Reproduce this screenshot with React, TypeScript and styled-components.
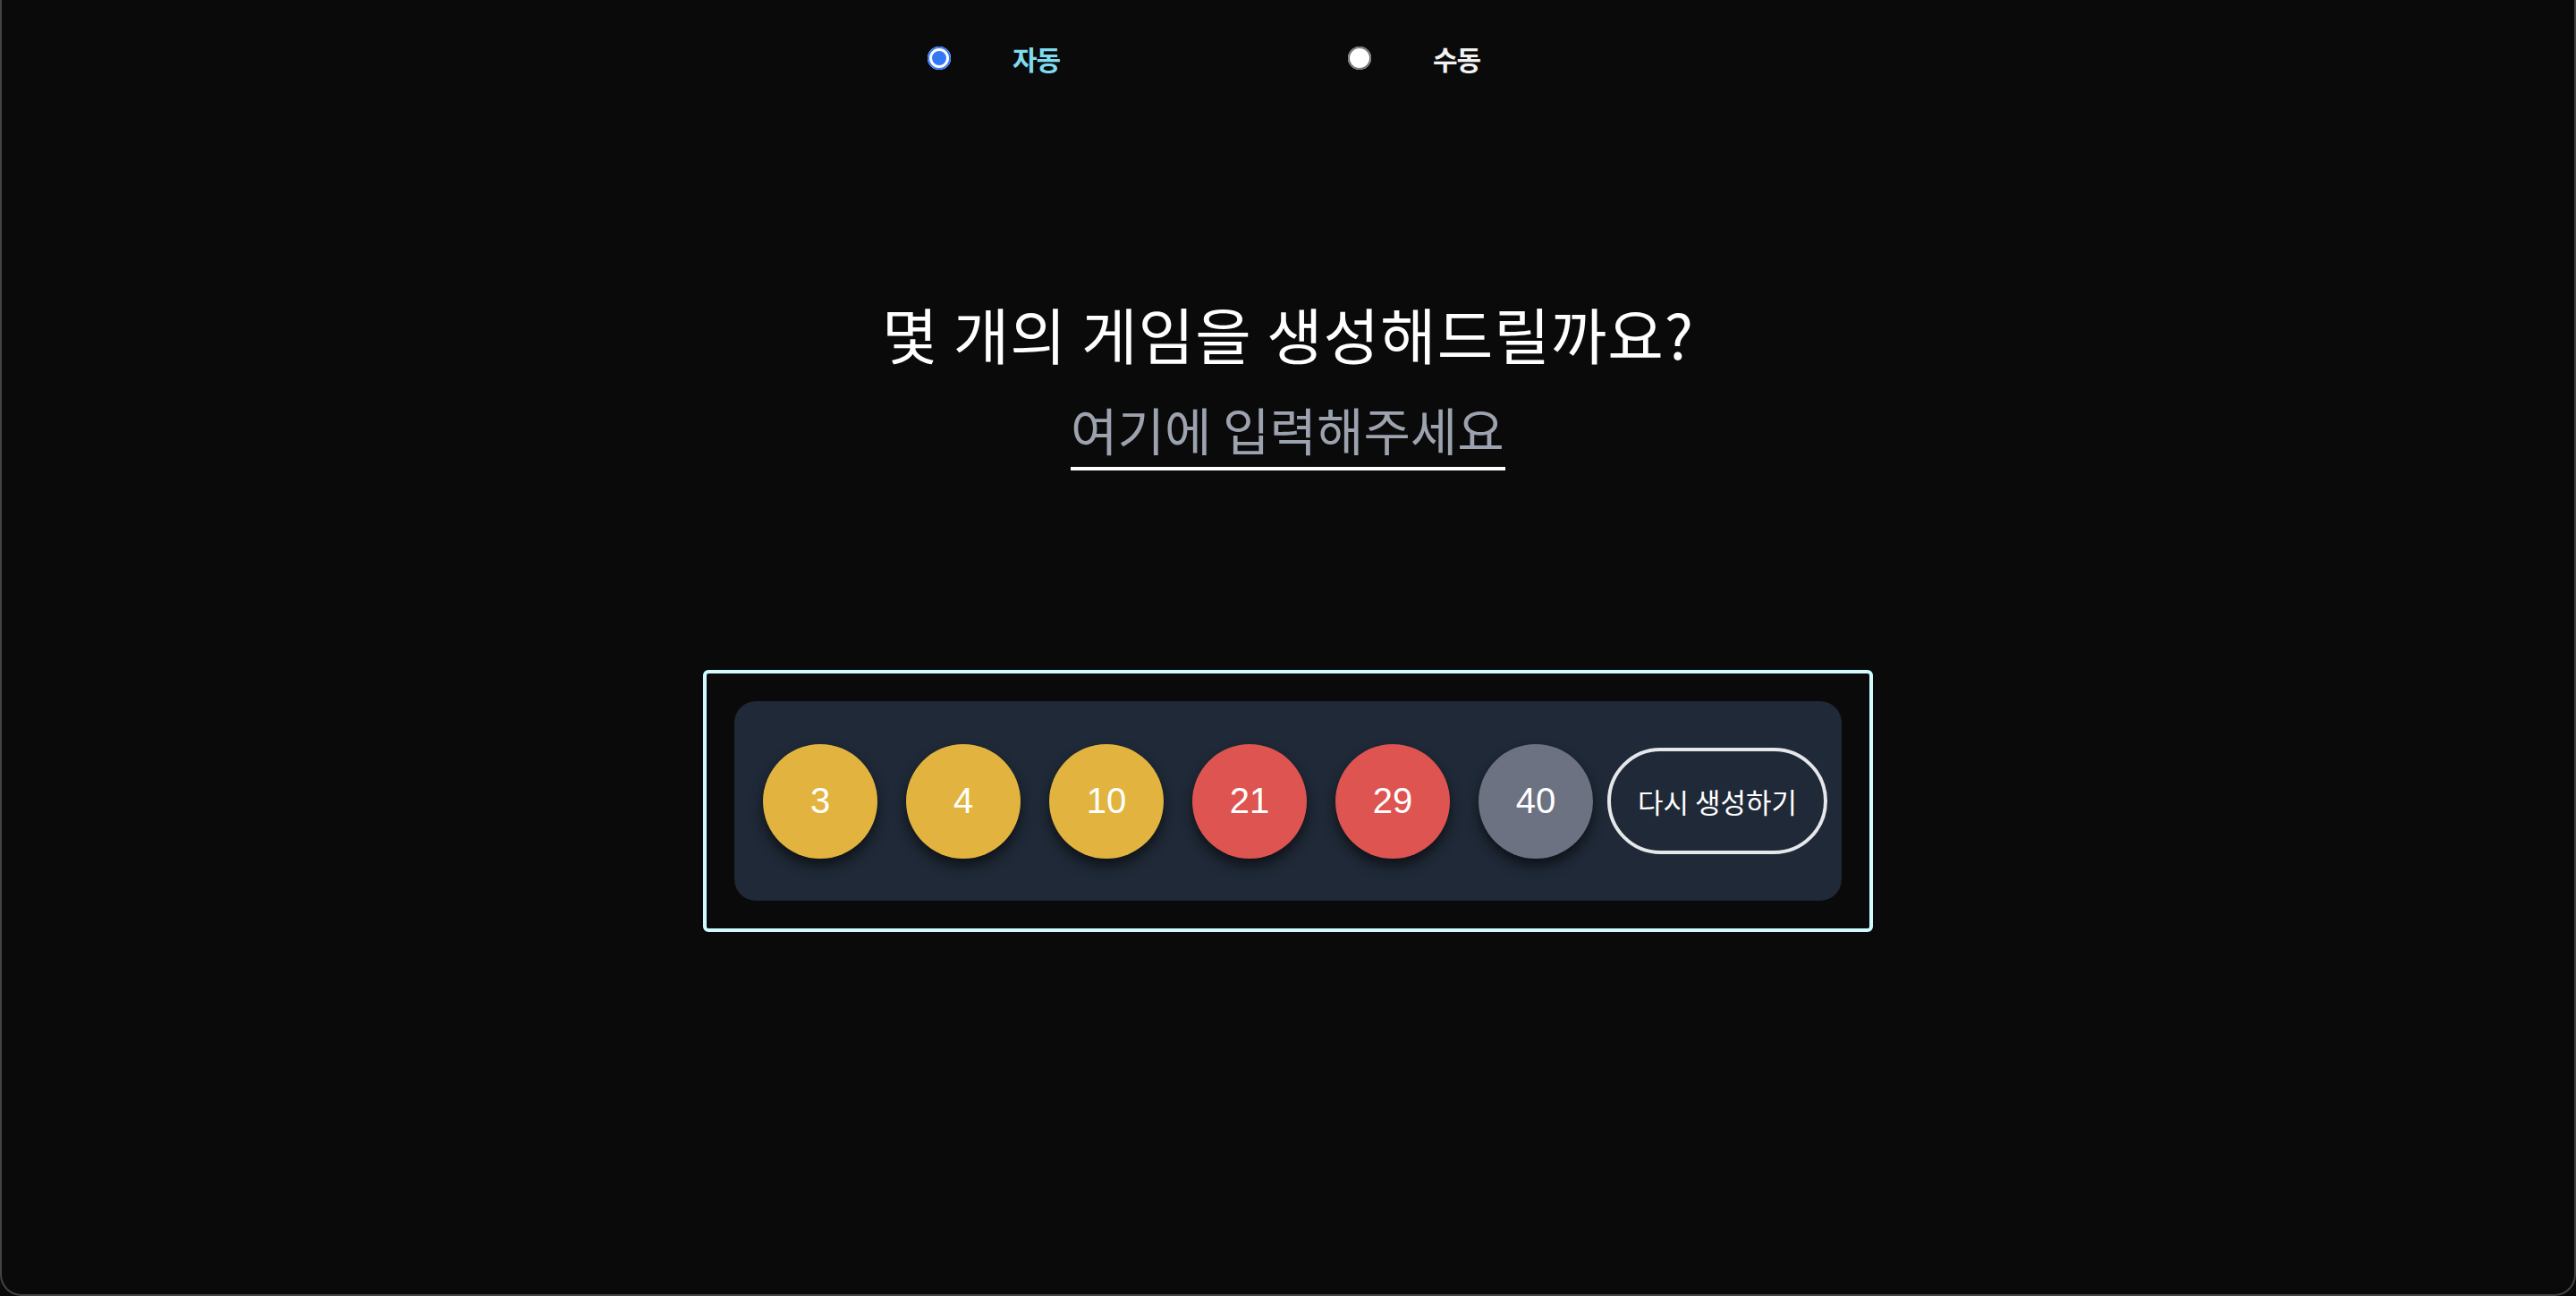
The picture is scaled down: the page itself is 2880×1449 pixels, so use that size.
import React, { useState } from "react";
import styled, { createGlobalStyle } from "styled-components";

const GlobalStyle = createGlobalStyle`
  html, body {
    margin: 0;
    padding: 0;
    background: #0a0a0a;
  }
  * { box-sizing: border-box; }
`;

const Frame = styled.div`
  height: 1449px;
  width: 100%;
  background: #0a0a0a;
  border: 2px solid #444444;
  border-top: none;
  border-radius: 0 0 24px 24px;
  display: flex;
  flex-direction: column;
  align-items: center;
  font-family: "Noto Sans CJK KR", "Noto Sans", sans-serif;
`;

const RadioRow = styled.div`
  margin-top: 43px;
  width: 940px;
  height: 40px;
  display: grid;
  grid-template-columns: 1fr 1fr;
`;

const Option = styled.label`
  display: flex;
  align-items: center;
  padding-left: 67px;
  gap: 69px;
  cursor: pointer;
`;

const RadioInput = styled.input`
  appearance: none;
  margin: 0;
  width: 26px;
  height: 26px;
  border-radius: 50%;
  background: #ffffff;
  box-shadow: inset 0 0 0 2px #767676;
  cursor: pointer;
  &:checked {
    background: #3478f6;
    box-shadow: inset 0 0 0 2px #3478f6, inset 0 0 0 5px #ffffff;
  }
`;

const OptionText = styled.span<{ $active: boolean }>`
  font-size: 30px;
  font-weight: 700;
  letter-spacing: -1px;
  color: ${(p) => (p.$active ? "#7fdcee" : "#f2f2f2")};
`;

const Title = styled.h1`
  margin: 256px 0 0;
  font-size: 68px;
  line-height: 68px;
  font-weight: 400;
  letter-spacing: 1px;
  color: #ffffff;
  white-space: nowrap;
`;

const CountInput = styled.input`
  margin-top: 43px;
  width: 486px;
  height: 76px;
  padding: 0 0 14px;
  border: none;
  border-bottom: 4px solid #ffffff;
  background: transparent;
  font-family: "Noto Sans CJK KR", "Noto Sans", sans-serif;
  font-size: 57px;
  line-height: 57px;
  color: #ffffff;
  outline: none;
  &::placeholder {
    color: #9ca3af;
  }
`;

const ResultBox = styled.div`
  margin-top: 223px;
  width: 1308px;
  border: 4px solid #cffafe;
  border-radius: 6px;
  padding: 31px;
`;

const GameRow = styled.div`
  height: 223px;
  background: #1f2937;
  border-radius: 24px;
  padding: 0 16px;
  display: flex;
  align-items: center;
`;

const Ball = styled.div<{ $color: string }>`
  width: 128px;
  height: 128px;
  margin: 0 16px;
  flex-shrink: 0;
  border-radius: 50%;
  background: ${(p) => p.$color};
  box-shadow: 0 8px 14px rgba(0, 0, 0, 0.55);
  display: flex;
  align-items: center;
  justify-content: center;
  font-family: "Liberation Sans", Arial, sans-serif;
  font-size: 40px;
  color: #ffffff;
`;

const RetryButton = styled.button`
  width: 246px;
  height: 119px;
  flex-shrink: 0;
  border: 4px solid #e5e7eb;
  border-radius: 60px;
  background: transparent;
  color: #ffffff;
  font-family: "Noto Sans CJK KR", "Noto Sans", sans-serif;
  font-size: 31px;
  cursor: pointer;
`;

const ballColor = (n: number) => {
  if (n <= 10) return "#e2b43f";
  if (n <= 20) return "#3b82f6";
  if (n <= 30) return "#dd5450";
  return "#6c7281";
};

export default function App() {
  const [mode, setMode] = useState<"auto" | "manual">("auto");
  const numbers = [3, 4, 10, 21, 29, 40];
  return (
    <>
      <GlobalStyle />
      <Frame>
        <RadioRow>
          <Option>
            <RadioInput
              type="radio"
              name="mode"
              checked={mode === "auto"}
              onChange={() => setMode("auto")}
            />
            <OptionText $active={mode === "auto"}>자동</OptionText>
          </Option>
          <Option>
            <RadioInput
              type="radio"
              name="mode"
              checked={mode === "manual"}
              onChange={() => setMode("manual")}
            />
            <OptionText $active={mode === "manual"}>수동</OptionText>
          </Option>
        </RadioRow>
        <Title>몇 개의 게임을 생성해드릴까요?</Title>
        <CountInput placeholder="여기에 입력해주세요" />
        <ResultBox>
          <GameRow>
            {numbers.map((n) => (
              <Ball key={n} $color={ballColor(n)}>
                {n}
              </Ball>
            ))}
            <RetryButton>다시 생성하기</RetryButton>
          </GameRow>
        </ResultBox>
      </Frame>
    </>
  );
}
